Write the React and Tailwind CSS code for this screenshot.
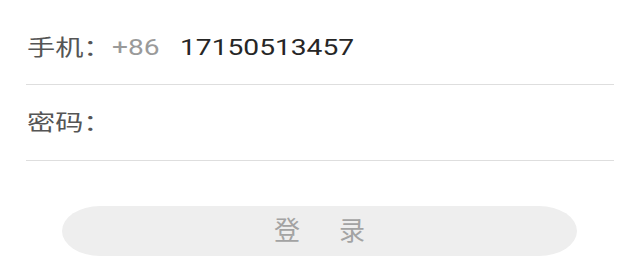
import React from 'react';

const font = { fontFamily: 'Roboto, "Noto Sans CJK SC", sans-serif' };

function Stretched({ className = '', children }) {
  return <span className={`inline-block origin-left scale-x-[1.28] whitespace-nowrap ${className}`}>{children}</span>;
}

export default function App() {
  return (
    <div className="w-[640px] h-[256px] bg-white overflow-hidden" style={font}>
      <div className="mx-[26px]">
        {/* Phone row */}
        <div className="h-[85px] pt-[10px] flex items-center border-b border-[#dedede]">
          <div className="w-[86px] pl-[1px]">
            <Stretched className="text-[22px] text-[#555555]">手机：</Stretched>
          </div>
          <div className="w-[68px]">
            <Stretched className="text-[22px] text-[#9a9a9a]">+86</Stretched>
          </div>
          <Stretched className="text-[22px] text-[#262626]">17150513457</Stretched>
        </div>

        {/* Password row */}
        <div className="h-[76px] flex items-center border-b border-[#dedede]">
          <div className="pl-[1px]">
            <Stretched className="text-[22px] text-[#555555]">密码：</Stretched>
          </div>
        </div>

        {/* Login button */}
        <div className="mt-[45px] ml-[36px] mr-[37px] h-[50px] rounded-[38px/25px] bg-[#eeeeee] flex items-center justify-center gap-[39px]">
          <span className="text-[26px] text-[#a3a3a3] leading-none">登</span>
          <span className="text-[26px] text-[#a3a3a3] leading-none">录</span>
        </div>
      </div>
    </div>
  );
}
